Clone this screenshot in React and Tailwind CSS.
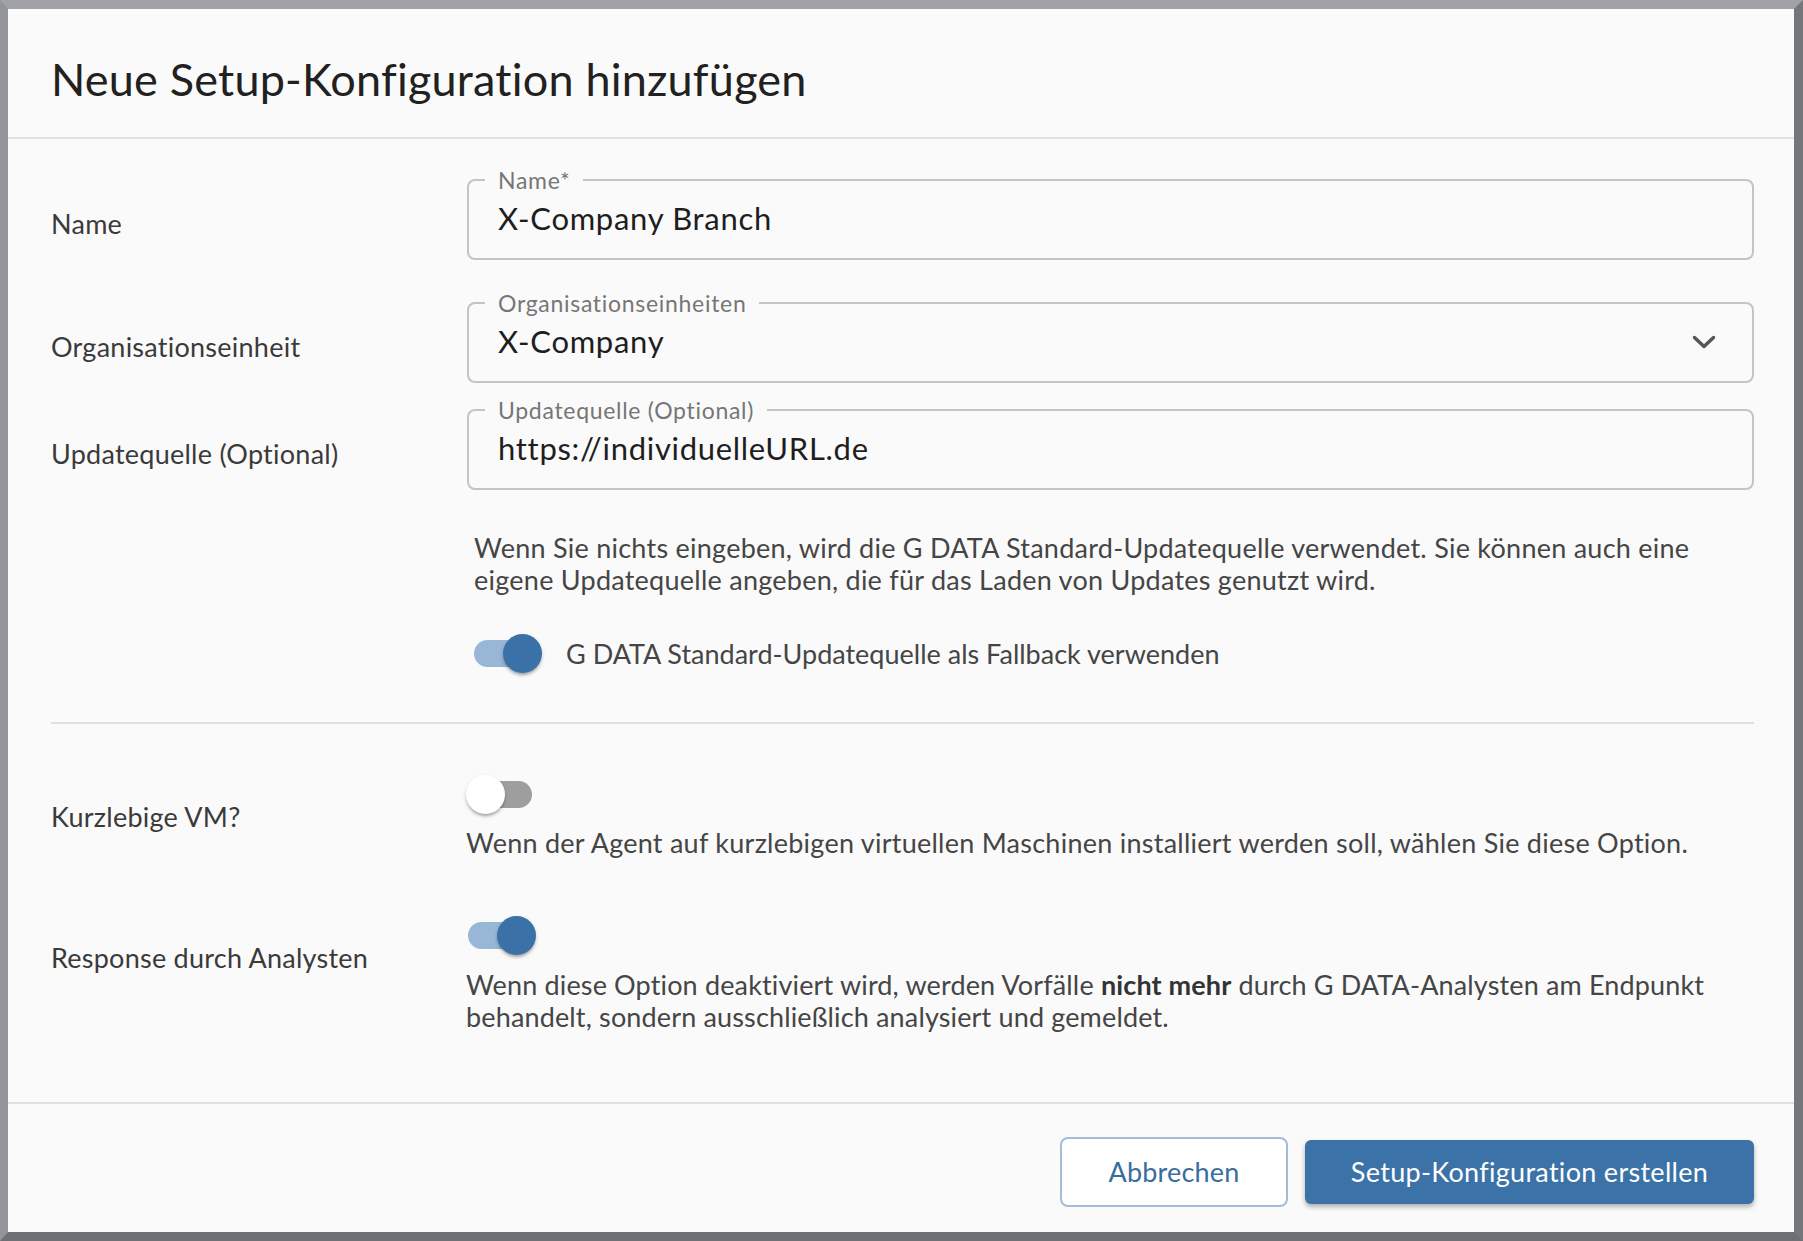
import React from "react";

function Switch({ on }) {
  return (
    <div className="relative w-[70px] h-[40px] shrink-0">
      <div
        className={
          on
            ? "absolute left-[2px] top-[6px] w-[64px] h-[27px] rounded-full bg-[#98b6d5]"
            : "absolute left-[2px] top-[6px] w-[64px] h-[27px] rounded-full bg-[#9e9e9e]"
        }
      />
      <div
        className={
          on
            ? "absolute left-[31px] top-0 w-[39px] h-[39px] rounded-full bg-[#3a72a8] shadow-[0_3px_3px_-1px_rgba(0,0,0,0.25),0_2px_4px_rgba(0,0,0,0.14)]"
            : "absolute left-0 top-0 w-[39px] h-[39px] rounded-full bg-white shadow-[0_3px_3px_-1px_rgba(0,0,0,0.25),0_2px_4px_rgba(0,0,0,0.14)]"
        }
      />
    </div>
  );
}

function Field({ label, value, select }) {
  return (
    <div className="relative flex-1 h-[81px] border-2 border-[#c4c4c4] rounded-[8px] pl-[29px] pr-[36px] flex items-center justify-between">
      <span className="absolute left-[16px] -top-[13px] px-[13px] bg-[#fafafa] text-[23px] leading-[24px] text-[#767676] tracking-[0.7px]">
        {label}
      </span>
      <span className="mb-[4px] text-[31px] leading-[36px] text-[#1e1e1e] tracking-[0.7px]">{value}</span>
      {select && (
        <svg width="24" height="15" viewBox="0 0 24 15" className="shrink-0">
          <polyline
            points="2.5,2.5 12,11.5 21.5,2.5"
            fill="none"
            stroke="#555555"
            strokeWidth="3.5"
            strokeLinecap="round"
            strokeLinejoin="round"
          />
        </svg>
      )}
    </div>
  );
}

export default function App() {
  return (
    <div className="w-[1803px] h-[1241px] border-t-[9px] border-l-[8px] border-r-[9px] border-b-[9px] border-t-[#a1a2a7] border-l-[#939499] border-r-[#75767b] border-b-[#6e6f74] bg-[#fafafa] flex flex-col font-['Lato',sans-serif]">
      {/* Header */}
      <div className="h-[130px] shrink-0 border-b-2 border-[#e0e0e0] flex items-center pl-[43px] pt-[12px]">
        <h1 className="text-[45px] leading-[52px] text-[#212121] tracking-[0.2px]">
          Neue Setup-Konfiguration hinzufügen
        </h1>
      </div>

      {/* Body */}
      <div className="flex-1 flex flex-col pl-[43px] pr-[40px] pt-[40px] text-[27px] leading-[32px] tracking-[0.25px]">
        <div className="flex items-center">
          <div className="w-[416px] shrink-0 pt-[9px] text-[#3a3a3a]">Name</div>
          <Field label="Name*" value="X-Company Branch" />
        </div>
        <div className="flex items-center mt-[42px]">
          <div className="w-[416px] shrink-0 pt-[9px] text-[#3a3a3a]">Organisationseinheit</div>
          <Field label="Organisationseinheiten" value="X-Company" select />
        </div>
        <div className="flex items-center mt-[26px]">
          <div className="w-[416px] shrink-0 pt-[9px] text-[#3a3a3a]">Updatequelle (Optional)</div>
          <Field label="Updatequelle (Optional)" value="https://individuelleURL.de" />
        </div>

        <div className="ml-[423px] mt-[42px] text-[#454545] whitespace-nowrap">
          Wenn Sie nichts eingeben, wird die G DATA Standard-Updatequelle verwendet. Sie können auch eine
          <br />
          eigene Updatequelle angeben, die für das Laden von Updates genutzt wird.
        </div>

        <div className="ml-[421px] mt-[38px] flex items-center gap-[24px]">
          <Switch on />
          <span className="text-[#454545] tracking-[0px]">G DATA Standard-Updatequelle als Fallback verwenden</span>
        </div>

        <div className="mt-[48px] h-[2px] bg-[#e0e0e0]" />

        <div className="flex items-start mt-[51px]">
          <div className="w-[415px] shrink-0 pt-[26px] text-[#3a3a3a]">Kurzlebige VM?</div>
          <div className="flex flex-col">
            <Switch on={false} />
            <div className="mt-[12px] text-[#454545] whitespace-nowrap">
              Wenn der Agent auf kurzlebigen virtuellen Maschinen installiert werden soll, wählen Sie diese Option.
            </div>
          </div>
        </div>

        <div className="flex items-start mt-[57px]">
          <div className="w-[415px] shrink-0 pt-[26px] text-[#3a3a3a]">Response durch Analysten</div>
          <div className="flex flex-col">
            <Switch on />
            <div className="mt-[13px] text-[#454545] whitespace-nowrap tracking-[0.15px]">
              Wenn diese Option deaktiviert wird, werden Vorfälle <span className="font-bold text-[#333]">nicht mehr</span> durch G DATA-Analysten am Endpunkt
              <br />
              behandelt, sondern ausschließlich analysiert und gemeldet.
            </div>
          </div>
        </div>
      </div>

      {/* Footer */}
      <div className="h-[130px] shrink-0 border-t-2 border-[#e0e0e0] flex items-center justify-end gap-[17px] pr-[40px] pt-[8px]">
        <button className="w-[228px] h-[70px] rounded-[8px] border-2 border-[#a3bdd7] bg-white text-[27px] tracking-[0.2px] text-[#3a6d9f]">
          Abbrechen
        </button>
        <button className="w-[449px] h-[64px] rounded-[6px] bg-[#3b72a8] text-[27px] tracking-[0.3px] text-white shadow-[0_3px_5px_rgba(0,0,0,0.3)]">
          Setup-Konfiguration erstellen
        </button>
      </div>
    </div>
  );
}
